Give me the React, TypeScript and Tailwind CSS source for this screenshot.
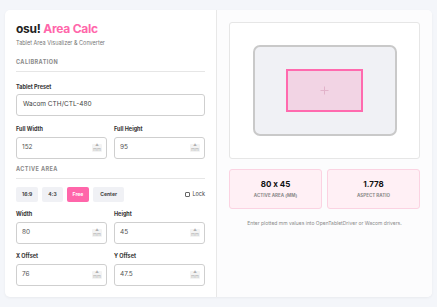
import { useState } from "react";

type FieldProps = { label: string; value: string };

function MmField({ label, value }: FieldProps) {
  return (
    <div className="flex-1">
      <label className="block text-[5.5px] font-bold leading-[7px] text-[#333]">{label}</label>
      <div className="mt-[4px] flex h-[22px] items-center justify-between rounded-[3px] border border-[#cfcfcf] bg-white pl-[5px] pr-[4px]">
        <span className="text-[6.5px] text-[#555]">{value}</span>
        <span className="flex flex-col items-center rounded-[1px] bg-[#f3f3f3] px-[1px] leading-none text-[#b0b0b0]">
          <span className="text-[3.5px]">▲</span>
          <span className="text-[4.5px]">mm</span>
        </span>
      </div>
    </div>
  );
}

function SectionTitle({ text }: { text: string }) {
  return (
    <div className="border-b border-[#e6e6e6] pb-[5px] text-[5.5px] font-bold uppercase leading-[7px] tracking-[0.08em] text-[#8a8a8a]">
      {text}
    </div>
  );
}

export default function App() {
  const [mode, setMode] = useState("Free");
  const presets = ["16:9", "4:3", "Free"];

  return (
    <div className="min-h-[307px] bg-[#f4f6fa] px-[5px] pt-[10px] font-['Inter',sans-serif] [font-feature-settings:'calt'_0]">
      <div className="flex h-[287px] overflow-hidden rounded-[5px] bg-white shadow-[0_1px_3px_rgba(0,0,0,0.05)]">
        <section className="w-[212px] border-r border-[#e8e8e8] px-[11px] pt-[12px]">
          <h1 className="text-[12px] font-bold leading-[14px] tracking-[-0.02em] text-[#222]">
            osu! <span className="text-[#ff66aa]">Area Calc</span>
          </h1>
          <p className="mt-[4px] text-[5.5px] leading-[7px] text-[#777]">
            Tablet Area Visualizer &amp; Converter
          </p>

          <div className="mt-[12px]">
            <SectionTitle text="Calibration" />
          </div>

          <label className="mt-[12px] block text-[5.5px] font-bold leading-[7px] text-[#333]">
            Tablet Preset
          </label>
          <div className="mt-[3px] flex h-[22px] items-center rounded-[3px] border border-[#cfcfcf] bg-white px-[6px] text-[6.5px] text-[#444]">
            Wacom CTH/CTL-480
          </div>

          <div className="mt-[10px] flex gap-[7px]">
            <MmField label="Full Width" value="152" />
            <MmField label="Full Height" value="95" />
          </div>

          <div className="mt-[7px]">
            <SectionTitle text="Active Area" />
          </div>

          <div className="mt-[8px] flex items-center gap-[4px]">
            {presets.map((p) => (
              <button
                key={p}
                onClick={() => setMode(p)}
                className={`h-[15px] rounded-[2px] px-[6px] text-[5px] font-bold ${
                  mode === p ? "bg-[#ff66aa] text-white" : "bg-[#f0f1f5] text-[#444]"
                }`}
              >
                {p}
              </button>
            ))}
            <button className="h-[15px] rounded-[2px] bg-[#f0f1f5] px-[7px] text-[5px] font-bold text-[#444]">
              Center
            </button>
            <label className="ml-auto flex items-center gap-[2px] text-[5.5px] text-[#444]">
              <span className="h-[5px] w-[5px] rounded-[1px] border border-[#666] bg-white" />
              Lock
            </label>
          </div>

          <div className="mt-[9px] flex gap-[7px]">
            <MmField label="Width" value="80" />
            <MmField label="Height" value="45" />
          </div>
          <div className="mt-[9px] flex gap-[7px]">
            <MmField label="X Offset" value="76" />
            <MmField label="Y Offset" value="47.5" />
          </div>
        </section>

        <section className="flex-1 bg-[#fcfcfd] px-[12px] pt-[12px]">
          <div className="flex h-[137px] items-center justify-center rounded-[3px] border border-[#e6e6e6] bg-white">
            <div className="flex h-[91px] w-[144px] items-center justify-center rounded-[7px] border-2 border-[#c9c9c9] bg-[#f0f1f5]">
              <div className="flex h-[43px] w-[77px] items-center justify-center border-2 border-[#ff6aae] bg-[#f2d4e4]">
                <svg width="9" height="9" viewBox="0 0 9 9">
                  <path d="M4.5 0.5v8M0.5 4.5h8" stroke="#e2b3ca" strokeWidth="1" />
                </svg>
              </div>
            </div>
          </div>

          <div className="mt-[10px] flex gap-[5px]">
            <div className="flex h-[40px] flex-1 flex-col items-center justify-center rounded-[3px] border border-[#fbd3e2] bg-[#fff0f5]">
              <div className="text-[8px] font-bold leading-[10px] text-[#111]">80 x 45</div>
              <div className="mt-[4px] text-[4.5px] font-bold uppercase leading-[6px] text-[#8a8a8a]">
                Active Area (mm)
              </div>
            </div>
            <div className="flex h-[40px] flex-1 flex-col items-center justify-center rounded-[3px] border border-[#fbd3e2] bg-[#fff0f5]">
              <div className="text-[8px] font-bold leading-[10px] text-[#111]">1.778</div>
              <div className="mt-[4px] text-[4.5px] font-bold uppercase leading-[6px] text-[#8a8a8a]">
                Aspect Ratio
              </div>
            </div>
          </div>

          <p className="mt-[11px] text-center text-[5px] leading-[7px] text-[#8a8a8a]">
            Enter plotted mm values into OpenTabletDriver or Wacom drivers.
          </p>
        </section>
      </div>
    </div>
  );
}
